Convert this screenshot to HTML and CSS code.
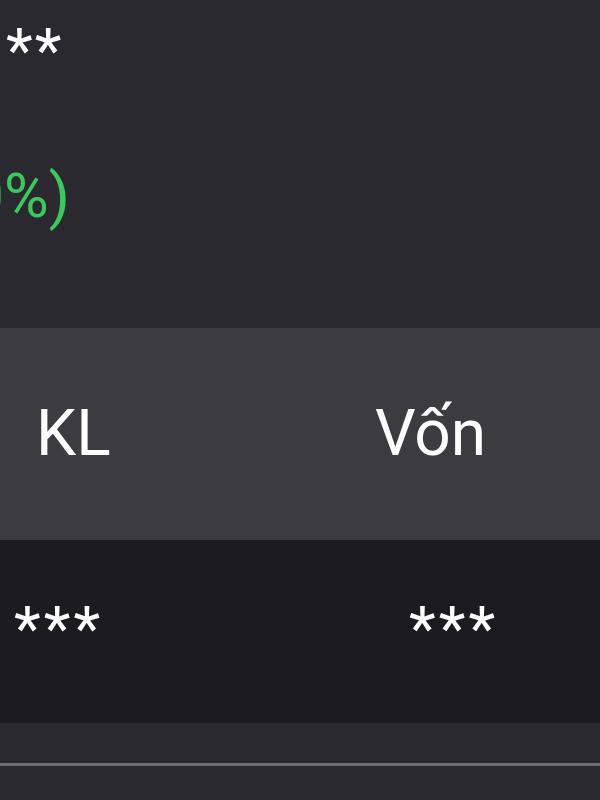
FILE: index.html
```html
<!DOCTYPE html>
<html lang="vi">
<head>
<meta charset="utf-8">
<link rel="stylesheet" href="styles.css">
</head>
<body>
<div class="screen">
  <section class="summary">
    <div class="masked">**</div>
    <div class="change"><span>+0,00 (0,00%)</span></div>
  </section>
  <div class="table-head">
    <div class="th">KL</div>
    <div class="th">Vốn</div>
  </div>
  <div class="table-row">
    <div class="td">***</div>
    <div class="td">***</div>
  </div>
  <footer class="bottom">
    <div class="divider"></div>
  </footer>
</div>
</body>
</html>
```
FILE: styles.css
```css
html, body {
  margin: 0;
  padding: 0;
  background: #2a292f;
}
.screen {
  width: 600px;
  height: 800px;
  overflow: hidden;
  display: flex;
  flex-direction: column;
  font-family: Roboto, "Noto Sans", sans-serif;
  color: #ffffff;
}
.summary {
  height: 328px;
  background: #2a292f;
  display: flex;
  flex-direction: column;
}
.masked {
  font-size: 62px;
  line-height: 62px;
  padding-left: 6px;
  letter-spacing: 2px;
  margin-top: 20px;
  height: 62px;
}
.change {
  width: 70px;
  overflow: hidden;
  display: flex;
  justify-content: flex-end;
  white-space: nowrap;
  color: #3cc85c;
  font-size: 61px;
  line-height: 72px;
  margin-top: 78px;
}
.table-head {
  height: 212px;
  background: #3c3c3f;
  display: grid;
  grid-template-columns: 339px 1fr;
  align-items: center;
  padding-left: 36px;
}
.th {
  font-size: 64px;
  line-height: 1;
}
.table-row {
  height: 183px;
  background: #1c1b1f;
  display: grid;
  grid-template-columns: 395px 1fr;
  align-items: center;
  padding-left: 14px;
}
.td {
  font-size: 62px;
  line-height: 1;
  letter-spacing: 3px;
  padding-bottom: 6px;
}
.bottom {
  flex: 1;
  background: #2a292f;
  padding-top: 40px;
}
.divider {
  height: 3px;
  background: #6e6e72;
}
```
